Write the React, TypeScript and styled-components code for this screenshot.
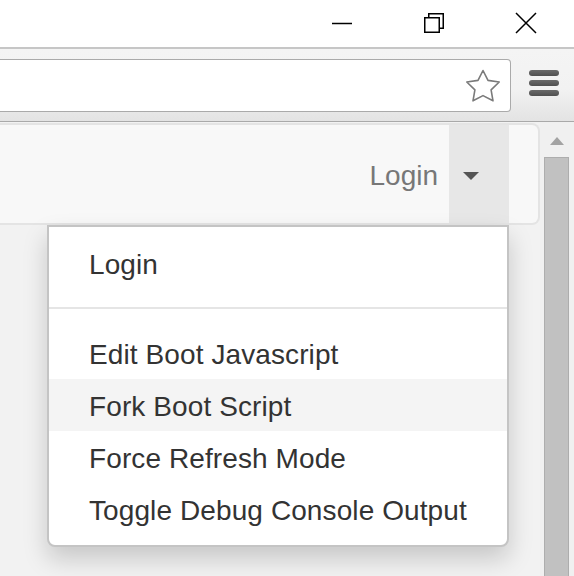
import React from "react";
import styled, { createGlobalStyle } from "styled-components";

const Global = createGlobalStyle`
  html, body { margin: 0; padding: 0; }
  body {
    width: 574px;
    height: 576px;
    overflow: hidden;
    font-family: "Liberation Sans", Arial, sans-serif;
    background: #fff;
  }
`;

const Window = styled.div`
  width: 574px;
  height: 576px;
  display: flex;
  flex-direction: column;
  overflow: hidden;
`;

const TitleBar = styled.div`
  height: 47px;
  flex: none;
  background: #fff;
  display: flex;
  justify-content: flex-end;
  padding-right: 2px;
  box-sizing: border-box;
`;

const WinButton = styled.div`
  width: 92px;
  height: 100%;
  display: flex;
  align-items: center;
  justify-content: center;
  color: #000;
  padding-bottom: 2px;
  box-sizing: border-box;
`;

const Toolbar = styled.div`
  height: 75px;
  flex: none;
  box-sizing: border-box;
  border-top: 2px solid #c6c6c6;
  border-bottom: 1px solid #a9a9a9;
  background: linear-gradient(#f4f4f4, #f2f2f2 55%, #e3e3e3);
  display: flex;
  align-items: flex-start;
  padding-right: 15px;
`;

const AddressBar = styled.div`
  flex: 1;
  margin-top: 10px;
  height: 53px;
  box-sizing: border-box;
  background: #fff;
  border: 1px solid #aaaaaa;
  border-left: none;
  border-radius: 0 4px 4px 0;
  display: flex;
  align-items: center;
  justify-content: flex-end;
  padding-right: 8px;
`;

const MenuButton = styled.div`
  width: 30px;
  margin-left: 18px;
  margin-top: 21px;
  display: flex;
  flex-direction: column;
  gap: 4px;
`;

const MenuBar = styled.div`
  height: 6px;
  border-radius: 3px;
  background: linear-gradient(#6a6a6a, #505050);
`;

const Page = styled.div`
  flex: 1;
  display: flex;
  background: #f2f2f2;
  min-height: 0;
`;

const Main = styled.div`
  flex: 1;
  position: relative;
  padding-top: 1px;
`;

const Navbar = styled.div`
  height: 102px;
  box-sizing: border-box;
  background: #f8f8f8;
  border: 2px solid #e4e4e4;
  border-left: none;
  border-radius: 0 8px 8px 0;
  display: flex;
  justify-content: flex-end;
  align-items: stretch;
  padding-right: 29px;
`;

const NavLink = styled.div`
  display: flex;
  align-items: center;
  font-size: 28px;
  color: #777;
  padding-right: 11px;
  padding-top: 4px;
  padding-left: 1px;
`;

const Toggle = styled.div`
  width: 60px;
  background: #e7e7e7;
  display: flex;
  align-items: center;
  padding-left: 14px;
  box-sizing: border-box;
`;

const Caret = styled.span`
  width: 0;
  height: 0;
  border-left: 8px solid transparent;
  border-right: 8px solid transparent;
  border-top: 8px solid #555;
  margin-top: 4px;
`;

const Dropdown = styled.div`
  position: absolute;
  top: 103px;
  right: 31px;
  width: 462px;
  box-sizing: border-box;
  background: #fff;
  border: 2px solid #c4c4c4;
  border-radius: 0 0 8px 8px;
  padding: 10px 0;
  box-shadow: 0 12px 24px rgba(0, 0, 0, 0.175);
`;

const Item = styled.div<{ $active?: boolean }>`
  height: 52px;
  box-sizing: border-box;
  padding: 4px 40px 0;
  line-height: 48px;
  font-size: 28px;
  letter-spacing: 0.1px;
  color: #333;
  white-space: nowrap;
  background: ${(p) => (p.$active ? "#f4f4f4" : "transparent")};
`;

const Divider = styled.div`
  height: 2px;
  margin: 18px 0;
  background: #e5e5e5;
`;

const Scrollbar = styled.div`
  width: 34px;
  flex: none;
  background: #f0f0f0;
  display: flex;
  flex-direction: column;
  align-items: center;
`;

const ArrowUp = styled.div`
  margin-top: 15px;
  width: 0;
  height: 0;
  border-left: 7px solid transparent;
  border-right: 7px solid transparent;
  border-bottom: 8px solid #a3a3a3;
  margin-right: 1px;
`;

const Thumb = styled.div`
  margin-top: 12px;
  width: 25px;
  flex: 1;
  box-sizing: border-box;
  background: #c1c1c1;
  border: 1px solid #adadad;
  border-bottom: none;
  margin-right: 1px;
`;

const Star = () => (
  <svg width="38" height="36" viewBox="0 0 38 36">
    <polygon
      points="19,2.5 24,12.4 35.2,14 27.1,21.8 29,32.8 19,27.6 9,32.8 10.9,21.8 2.8,14 14,12.4"
      fill="#fff"
      stroke="#7a7a7a"
      strokeWidth="1.6"
      strokeLinejoin="round"
    />
  </svg>
);

export default function App() {
  return (
    <Window>
      <Global />
      <TitleBar>
        <WinButton>
          <svg width="22" height="22" viewBox="0 0 22 22">
            <line x1="1" y1="11.5" x2="21" y2="11.5" stroke="#000" strokeWidth="1.5" />
          </svg>
        </WinButton>
        <WinButton>
          <svg width="22" height="22" viewBox="0 0 22 22">
            <rect x="1.75" y="5.75" width="14.5" height="14.5" fill="none" stroke="#000" strokeWidth="1.5" />
            <path d="M5.75 5.75 V1.75 H20.25 V16.25 H16.25" fill="none" stroke="#000" strokeWidth="1.5" />
          </svg>
        </WinButton>
        <WinButton>
          <svg width="22" height="22" viewBox="0 0 22 22">
            <path d="M1 1 L21 21 M21 1 L1 21" stroke="#000" strokeWidth="1.5" />
          </svg>
        </WinButton>
      </TitleBar>
      <Toolbar>
        <AddressBar>
          <Star />
        </AddressBar>
        <MenuButton>
          <MenuBar />
          <MenuBar />
          <MenuBar />
        </MenuButton>
      </Toolbar>
      <Page>
        <Main>
          <Navbar>
            <NavLink>Login</NavLink>
            <Toggle>
              <Caret />
            </Toggle>
          </Navbar>
          <Dropdown>
            <Item>Login</Item>
            <Divider />
            <Item>Edit Boot Javascript</Item>
            <Item $active>Fork Boot Script</Item>
            <Item>Force Refresh Mode</Item>
            <Item>Toggle Debug Console Output</Item>
          </Dropdown>
        </Main>
        <Scrollbar>
          <ArrowUp />
          <Thumb />
        </Scrollbar>
      </Page>
    </Window>
  );
}
